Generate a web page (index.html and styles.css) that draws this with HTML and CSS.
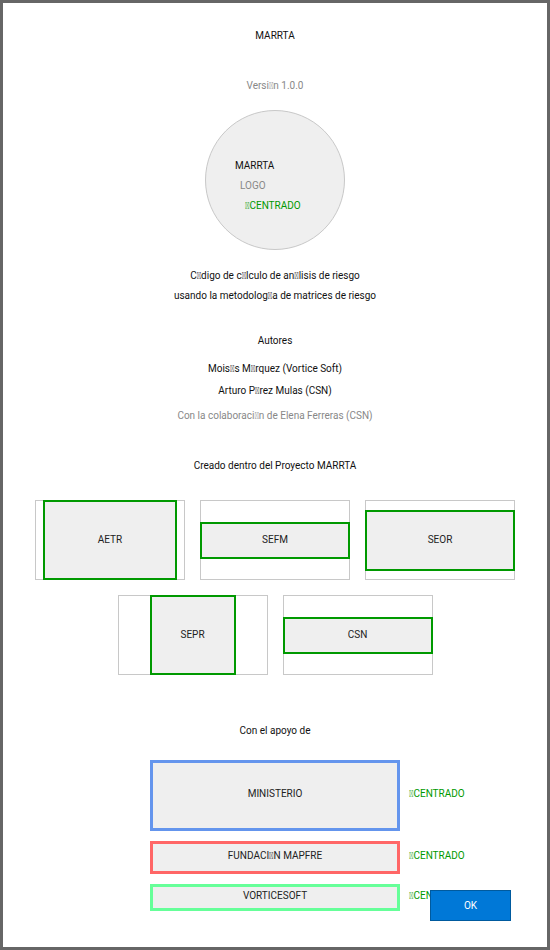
FILE: index.html
```html
<!DOCTYPE html>
<html lang="es">
<head>
  <meta charset="UTF-8" />
  <title>Acerca de MARRTA</title>
  <link rel="stylesheet" href="styles.css">
</head>
<body>

  <div class="ventana">
    <div class="titulo">MARRTA</div>
    <div class="version">Versi&#xE000;n 1.0.0</div>

    <!-- Logo provisional -->
    <div class="logo">
      <div class="logo-nombre">MARRTA</div>
      <div class="logo-sub">LOGO</div>
      <div class="centrado logo-nota">&#xE000;CENTRADO</div>
    </div>

    <p class="descripcion">C&#xE000;digo de c&#xE000;lculo de an&#xE000;lisis de riesgo<br>usando la metodolog&#xE000;a de matrices de riesgo</p>

    <div class="seccion autores">Autores</div>
    <div class="autor">Mois&#xE000;s M&#xE000;rquez (Vortice Soft)</div>
    <div class="autor">Arturo P&#xE000;rez Mulas (CSN)</div>
    <div class="colabora">Con la colaboraci&#xE000;n de Elena Ferreras (CSN)</div>

    <div class="seccion proyecto">Creado dentro del Proyecto MARRTA</div>
    <div class="socios">
      <div class="socio"><div class="imagen aetr">AETR</div></div>
      <div class="socio"><div class="imagen sefm">SEFM</div></div>
      <div class="socio"><div class="imagen seor">SEOR</div></div>
      <div class="socio"><div class="imagen sepr">SEPR</div></div>
      <div class="socio"><div class="imagen csn">CSN</div></div>
    </div>

    <div class="seccion apoyo-titulo">Con el apoyo de</div>
    <div class="apoyos">
      <div class="caja ministerio">MINISTERIO</div>
      <div class="centrado nota">&#xE000;CENTRADO</div>
      <div class="caja mapfre">FUNDACI&#xE000;N MAPFRE</div>
      <div class="centrado nota">&#xE000;CENTRADO</div>
      <div class="caja vortice">VORTICESOFT</div>
      <div class="centrado nota">&#xE000;CENTRADO</div>
    </div>

    <button class="ok" type="button">OK</button>
  </div>

</body>
</html>
```

FILE: styles.css
```css
/* Ventana "Acerca de" */
body {
  margin: 0;
  font-family: Roboto, "Noto Sans", sans-serif;
  font-size: 10px;
}

.ventana {
  position: relative;
  width: 550px;
  height: 950px;
  box-sizing: border-box;
  border: 3px solid #666;
  background-color: white;
  padding-top: 23px;
  display: flex;
  flex-direction: column;
  align-items: center;
  line-height: 20px;
  color: #111;
}

.version {
  margin-top: 30px;
  color: #888;
}

/* Circulo del logo */
.logo {
  margin-top: 14px;
  width: 140px;
  height: 140px;
  box-sizing: border-box;
  border: 1.5px solid #c8c8c8;
  border-radius: 50%;
  background-color: #efefef;
  padding: 45px 0 0 29px;
}

.logo-sub {
  margin-left: 5px;
  color: #888;
}

.logo-nota {
  margin-left: 10px;
}

.centrado {
  color: #009900;
}

.descripcion {
  margin: 16px 0 0;
  text-align: center;
}

.autores {
  margin-top: 25px;
}

.autor {
  margin-top: 2px;
}

.autores + .autor {
  margin-top: 8px;
}

.colabora {
  margin-top: 5px;
  color: #888;
}

.proyecto {
  margin-top: 30px;
}

/* Logos de los socios */
.socios {
  margin-top: 24px;
  width: 480px;
  display: flex;
  flex-wrap: wrap;
  justify-content: center;
  gap: 15px;
}

.socio {
  width: 150px;
  height: 80px;
  box-shadow: inset 0 0 0 1px #c8c8c8;
  display: flex;
  align-items: center;
  justify-content: center;
}

.imagen {
  box-sizing: border-box;
  border: 2px solid #009900;
  background-color: #efefef;
  display: flex;
  align-items: center;
  justify-content: center;
  color: #222;
}

.aetr { width: 134px; height: 80px; }
.sefm { width: 150px; height: 37px; }
.seor { width: 150px; height: 61px; }
.sepr { width: 86px; height: 80px; }
.csn  { width: 150px; height: 37px; }

.apoyo-titulo {
  margin-top: 46px;
}

/* Cajas de apoyo */
.apoyos {
  align-self: flex-start;
  margin: 19px 0 0 147px;
  display: grid;
  grid-template-columns: 250px 1fr;
  width: 397px;
  row-gap: 10px;
  column-gap: 9px;
  align-items: center;
}

.caja {
  box-sizing: border-box;
  border: 3px solid;
  background-color: #efefef;
  display: flex;
  align-items: center;
  justify-content: center;
  padding-bottom: 4px;
  color: #222;
}

.nota {
  padding-bottom: 4px;
}

.ministerio { height: 71px; border-color: #6495ed; }
.mapfre     { height: 33px; border-color: #ff6666; }
.vortice    { height: 27px; border-color: #66ff99; }

.ok {
  position: absolute;
  right: 36px;
  bottom: 26px;
  width: 81px;
  height: 31px;
  background-color: #0078d7;
  border: 1px solid #005a9e;
  color: white;
  font-family: inherit;
  font-size: 10px;
}
```
